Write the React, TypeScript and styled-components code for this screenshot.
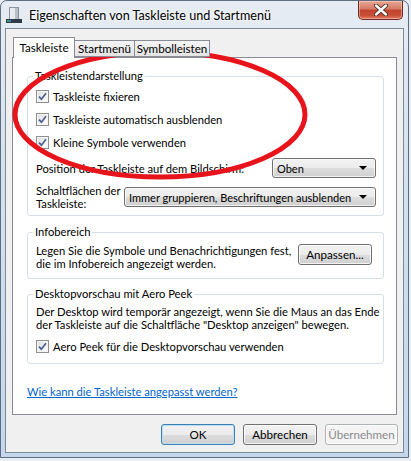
import React from "react";
import styled, { createGlobalStyle } from "styled-components";

const GlobalStyle = createGlobalStyle`
  html, body {
    margin: 0;
    padding: 0;
    background: #e8edf3;
  }
  body {
    font-family: Lato, "Noto Sans", sans-serif;
    font-size: 11.2px;
    color: #000;
  }
`;

const Stage = styled.div`
  position: relative;
  width: 411px;
  height: 461px;
`;

const Window = styled.div`
  width: 409px;
  height: 458px;
  box-sizing: border-box;
  border: 1px solid #5d6e82;
  border-radius: 7px 7px 0 0;
  padding: 0 4px 4px 4px;
  display: flex;
  flex-direction: column;
  background: linear-gradient(180deg, #e6ecf3 0%, #d6e2ef 35%, #c4d7ec 100%);
`;

const TitleBar = styled.div`
  height: 27px;
  display: flex;
  align-items: center;
`;

const Title = styled.span`
  font-size: 12.6px;
  margin-left: 7px;
  margin-top: 2px;
  text-shadow: 0 0 6px #fff, 0 0 3px #fff;
`;

const CloseButton = styled.div`
  margin-left: auto;
  margin-right: 1px;
  align-self: flex-start;
  width: 45px;
  height: 19px;
  box-sizing: border-box;
  border: 1px solid #6e2a25;
  border-top: none;
  border-radius: 0 0 5px 5px;
  background: linear-gradient(180deg, #e8a893 0%, #d47a66 45%, #c2432f 50%, #c94f38 80%, #e27b5f 100%);
  box-shadow: inset 0 0 0 1px rgba(255, 220, 210, 0.45);
  display: flex;
  align-items: center;
  justify-content: center;
`;

const Client = styled.div`
  flex: 1;
  border: 1px solid #7c8996;
  background: #f0f0f0;
  padding: 8px 0 7px 0;
  display: flex;
  flex-direction: column;
`;

const TabStrip = styled.div`
  height: 20px;
  display: flex;
  align-items: flex-end;
  margin-left: 7px;
  position: relative;
  z-index: 1;
`;

const Tab = styled.div<{ $active?: boolean; $w: number }>`
  box-sizing: border-box;
  width: ${(p) => p.$w}px;
  height: ${(p) => (p.$active ? "21px" : "17px")};
  margin-bottom: ${(p) => (p.$active ? "-1px" : "0")};
  border: 1px solid #898c95;
  border-bottom: ${(p) => (p.$active ? "none" : "1px solid #898c95")};
  margin-left: ${(p) => (p.$active ? "0" : "-1px")};
  padding-top: ${(p) => (p.$active ? "2px" : "0")};
  background: ${(p) => (p.$active ? "#fff" : "linear-gradient(180deg, #f4f4f4, #e4e4e4)")};
  font-size: 11.6px;
  line-height: 15px;
  text-align: center;
  white-space: nowrap;
  &:first-child {
    margin-left: 0;
  }
`;

const Panel = styled.div`
  height: 358px;
  box-sizing: border-box;
  margin: 0 6px;
  border: 1px solid #898c95;
  background: #fff;
  padding: 11px 12px 0 14px;
  display: flex;
  flex-direction: column;
`;

const Group = styled.fieldset<{ $pad: string; $top?: number }>`
  margin: ${(p) => p.$top ?? 0}px 0 0 0;
  border: 1px solid #d5dfe5;
  border-radius: 3px;
  padding: ${(p) => p.$pad};
  display: flex;
  flex-direction: column;
  min-width: 0;
`;

const Legend = styled.legend`
  padding: 0 2px;
  margin-left: -3px;
  line-height: 14px;
`;

const Row = styled.div<{ $top?: number; $h: number; $align?: string }>`
  display: flex;
  align-items: ${(p) => p.$align ?? "center"};
  height: ${(p) => p.$h}px;
  margin-top: ${(p) => p.$top ?? 0}px;
`;

const Box = styled.span`
  width: 13px;
  height: 13px;
  box-sizing: border-box;
  border: 1px solid #8e8f8f;
  background: linear-gradient(135deg, #d9dadb 0%, #f3f3f3 60%, #fdfdfd 100%);
  box-shadow: inset 0 0 0 1px #f6f6f6;
  display: inline-flex;
  align-items: center;
  justify-content: center;
  margin-right: 4px;
  flex: none;
`;

const Text = styled.div`
  line-height: 13px;
  white-space: nowrap;
`;

const Label = styled(Text)<{ $w?: number }>`
  width: ${(p) => (p.$w ? `${p.$w}px` : "auto")};
  flex: none;
  white-space: normal;
`;

const Combo = styled.div<{ $w: number }>`
  margin-left: auto;
  width: ${(p) => p.$w}px;
  flex: none;
  height: 20px;
  box-sizing: border-box;
  border: 1px solid #707070;
  border-radius: 3px;
  background: linear-gradient(180deg, #f2f2f2 0%, #ebebeb 50%, #dddddd 51%, #cfcfcf 100%);
  box-shadow: inset 0 0 0 1px rgba(255, 255, 255, 0.7);
  display: flex;
  align-items: center;
  padding: 0 8px 0 4px;
  font-size: 11px;
  white-space: nowrap;
`;

const Arrow = styled.span`
  margin-left: auto;
  width: 0;
  height: 0;
  border-left: 4px solid transparent;
  border-right: 4px solid transparent;
  border-top: 4px solid #000;
`;

type ButtonKind = "default" | "normal" | "disabled";

const PushButton = styled.div<{ $kind?: ButtonKind; $push?: boolean }>`
  width: ${(p) => (p.$kind === "disabled" ? "73px" : "74px")};
  height: 21px;
  flex: none;
  box-sizing: border-box;
  border: 1px solid
    ${(p) => (p.$kind === "default" ? "#3c7fb1" : p.$kind === "disabled" ? "#adb2b5" : "#707070")};
  border-radius: 3px;
  background: ${(p) =>
    p.$kind === "disabled"
      ? "#f4f4f4"
      : "linear-gradient(180deg, #f2f2f2 0%, #ebebeb 50%, #dddddd 51%, #cfcfcf 100%)"};
  box-shadow: inset 0 0 0 1px
    ${(p) => (p.$kind === "default" ? "#b9e0f5" : "rgba(255, 255, 255, 0.75)")};
  color: ${(p) => (p.$kind === "disabled" ? "#8a8a8a" : "#000")};
  display: flex;
  align-items: center;
  justify-content: center;
  font-size: 11.6px;
  margin-left: ${(p) => (p.$push ? "auto" : "0")};
`;

const ButtonBar = styled.div`
  display: flex;
  justify-content: flex-end;
  gap: 8px;
  margin: 9px 5px 0 0;
`;

const HelpLink = styled.a`
  margin-top: 21px;
  line-height: 14px;
  color: #0066cc;
  text-decoration: underline;
  cursor: pointer;
`;

const Marker = styled.svg`
  position: absolute;
  left: 0;
  top: 0;
  pointer-events: none;
`;

const AppIcon = () => (
  <svg width="16" height="16" viewBox="0 0 16 16" style={{ marginLeft: 1 }}>
    <rect x="3.5" y="0.5" width="9" height="12" fill="#e9ecef" stroke="#8c939a" />
    <rect x="9" y="1" width="3" height="11" fill="#b7bec6" />
    <rect x="0" y="12" width="16" height="4" fill="#2f3b47" />
    <rect x="1" y="13" width="2" height="2" fill="#3fa34d" />
    <rect x="3" y="13" width="2" height="2" fill="#2f7fd0" />
  </svg>
);

const CloseGlyph = () => (
  <svg width="14" height="12" viewBox="0 0 14 12">
    <path d="M2 1.5 L12 10.5 M12 1.5 L2 10.5" stroke="#4a2620" strokeWidth="4.2" strokeLinecap="round" />
    <path d="M2 1.5 L12 10.5 M12 1.5 L2 10.5" stroke="#fff" strokeWidth="2.4" strokeLinecap="round" />
  </svg>
);

const Check = () => (
  <Box>
    <svg width="9" height="9" viewBox="0 0 9 9">
      <path d="M1 4.6 L3.4 7.2 L8 1.2" fill="none" stroke="#4b5d92" strokeWidth="1.7" />
    </svg>
  </Box>
);

const CheckOption = ({ label, top }: { label: string; top?: number }) => (
  <Row $h={16} $top={top}>
    <Check />
    <Text>{label}</Text>
  </Row>
);

const App = () => (
  <Stage>
    <GlobalStyle />
    <Window>
      <TitleBar>
        <AppIcon />
        <Title>Eigenschaften von Taskleiste und Startmenü</Title>
        <CloseButton>
          <CloseGlyph />
        </CloseButton>
      </TitleBar>
      <Client>
        <TabStrip>
          <Tab $active $w={62}>Taskleiste</Tab>
          <Tab $w={61}>Startmenü</Tab>
          <Tab $w={76}>Symbolleisten</Tab>
        </TabStrip>
        <Panel>
          <Group $pad="5px 7px 5px 8px">
            <Legend>Taskleistendarstellung</Legend>
            <CheckOption label="Taskleiste fixieren" />
            <CheckOption label="Taskleiste automatisch ausblenden" top={7} />
            <CheckOption label="Kleine Symbole verwenden" top={7} />
            <Row $h={20} $top={8}>
              <Text>Position der Taskleiste auf dem Bildschirm:</Text>
              <Combo $w={104}>
                Oben
                <Arrow />
              </Combo>
            </Row>
            <Row $h={26} $top={6}>
              <Label $w={88}>Schaltflächen der Taskleiste:</Label>
              <Combo $w={252}>
                Immer gruppieren, Beschriftungen ausblenden
                <Arrow />
              </Combo>
            </Row>
          </Group>

          <Group $pad="5px 11px 8px 8px" $top={9}>
            <Legend>Infobereich</Legend>
            <Row $h={26} $align="flex-start">
              <Text>
                Legen Sie die Symbole und Benachrichtigungen fest,
                <br />
                die im Infobereich angezeigt werden.
              </Text>
              <PushButton $kind="normal" $push>Anpassen...</PushButton>
            </Row>
          </Group>

          <Group $pad="4px 8px 9px 8px" $top={8}>
            <Legend>Desktopvorschau mit Aero Peek</Legend>
            <Text>
              Der Desktop wird temporär angezeigt, wenn Sie die Maus an das Ende
              <br />
              der Taskleiste auf die Schaltfläche "Desktop anzeigen" bewegen.
            </Text>
            <CheckOption label="Aero Peek für die Desktopvorschau verwenden" top={7} />
          </Group>

          <HelpLink>Wie kann die Taskleiste angepasst werden?</HelpLink>
        </Panel>
        <ButtonBar>
          <PushButton $kind="default">OK</PushButton>
          <PushButton $kind="normal">Abbrechen</PushButton>
          <PushButton $kind="disabled">Übernehmen</PushButton>
        </ButtonBar>
      </Client>
    </Window>
    <Marker width="411" height="461" viewBox="0 0 411 461">
      <ellipse cx="160" cy="114.5" rx="145" ry="62.5" fill="none" stroke="#e8141c" strokeWidth="5" />
    </Marker>
  </Stage>
);

export default App;
